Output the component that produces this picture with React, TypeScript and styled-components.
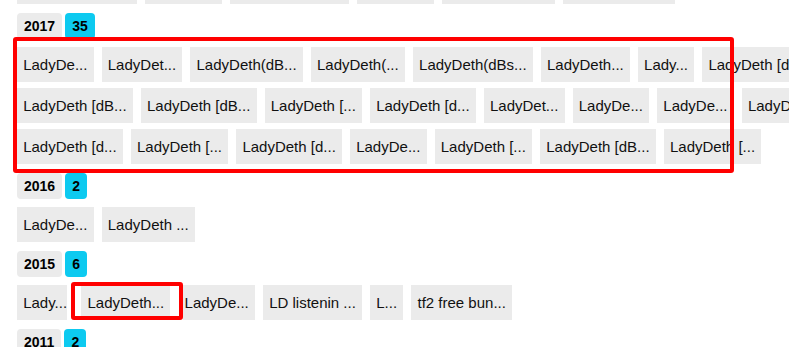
import React from 'react';
import styled, { createGlobalStyle } from 'styled-components';

const GlobalStyle = createGlobalStyle`
  html, body {
    margin: 0;
    padding: 0;
    overflow: hidden;
    background: #fff;
  }
  body {
    font-family: "Liberation Sans", Arial, sans-serif;
    color: #111;
  }
`;

const Page = styled.div`
  display: flex;
  flex-direction: column;
  gap: 9px;
  margin-top: -31px;
  padding-left: 17px;
`;

const Group = styled.section`
  display: flex;
  flex-direction: column;
  gap: 8px;
`;

const Header = styled.div`
  display: flex;
  align-items: center;
  gap: 3px;
`;

const YearTag = styled.span`
  height: 26px;
  line-height: 26px;
  padding: 0 7px;
  border-radius: 4px;
  background: #ebebeb;
  font-size: 14px;
  font-weight: 700;
  color: #000;
`;

const CountBadge = styled(YearTag)`
  background: #0dcaf0;
`;

const Rows = styled.div`
  position: relative;
  display: flex;
  flex-direction: column;
  gap: 6px;
`;

const TileRow = styled.div`
  display: flex;
  align-items: flex-start;
  gap: 8px;
  white-space: nowrap;
`;

const Tile = styled.span`
  flex: none;
  display: flex;
  align-items: center;
  height: 35px;
  padding: 0 6.2px;
  background: #ebebeb;
  font-size: 15px;
  color: #111;
`;

// annotation frame drawn over the grid of 2017
const Frame = styled.div`
  position: absolute;
  top: -10px;
  bottom: -9px;
  left: -4px;
  width: 721px;
  border: 4px solid #ff0000;
  border-radius: 3px;
  box-sizing: border-box;
  pointer-events: none;
`;

// single highlighted tile, pasted with a white margin
const Marked = styled.span`
  position: relative;
  flex: none;
  display: flex;
  margin: -3px -13px 0 -14px;
  padding: 3px 13px 0 14px;
  background: #fff;

  &::after {
    content: '';
    position: absolute;
    top: 0;
    bottom: 0;
    left: 4px;
    right: 0;
    border: 4px solid #ff0000;
    border-radius: 3px;
  }
`;

type YearGroup = {
  year: string;
  count: number;
  rows: string[][];
  framed?: boolean;
  marked?: number;
};

const previousTail = [
  'LadyDeth(dBs...',
  'LadyDe...',
  'LadyDeth(dBs...',
  'LadyDe...',
  'LadyDeth(dB...',
  'LadyDeth(dB...',
];

const groups: YearGroup[] = [
  {
    year: '2017',
    count: 35,
    framed: true,
    rows: [
      [
        'LadyDe...',
        'LadyDet...',
        'LadyDeth(dB...',
        'LadyDeth(...',
        'LadyDeth(dBs...',
        'LadyDeth...',
        'Lady...',
        'LadyDeth [d...',
        'LadyDeth [dB...',
        'LadyDe...',
      ],
      [
        'LadyDeth [dB...',
        'LadyDeth [dB...',
        'LadyDeth [...',
        'LadyDeth [d...',
        'LadyDet...',
        'LadyDe...',
        'LadyDe...',
        'LadyDe...',
        'LadyDeth [...',
      ],
      [
        'LadyDeth [d...',
        'LadyDeth [...',
        'LadyDeth [d...',
        'LadyDe...',
        'LadyDeth [...',
        'LadyDeth [dB...',
        'LadyDeth [...',
      ],
    ],
  },
  {
    year: '2016',
    count: 2,
    rows: [['LadyDe...', 'LadyDeth ...']],
  },
  {
    year: '2015',
    count: 6,
    marked: 1,
    rows: [
      [
        'Lady...',
        'LadyDeth...',
        'LadyDe...',
        'LD listenin ...',
        'L...',
        'tf2 free bun...',
      ],
    ],
  },
  {
    year: '2011',
    count: 2,
    rows: [['LadyDe...', 'LadyDeth...']],
  },
];

const App: React.FC = () => (
  <>
    <GlobalStyle />
    <Page>
      <TileRow>
        {previousTail.map((name, i) => (
          <Tile key={i}>{name}</Tile>
        ))}
      </TileRow>
      {groups.map((g) => (
        <Group key={g.year}>
          <Header>
            <YearTag>{g.year}</YearTag>
            <CountBadge>{g.count}</CountBadge>
          </Header>
          <Rows>
            {g.rows.map((row, r) => (
              <TileRow key={r}>
                {row.map((name, i) =>
                  g.marked === i ? (
                    <Marked key={i}>
                      <Tile>{name}</Tile>
                    </Marked>
                  ) : (
                    <Tile key={i}>{name}</Tile>
                  )
                )}
              </TileRow>
            ))}
            {g.framed && <Frame />}
          </Rows>
        </Group>
      ))}
    </Page>
  </>
);

export default App;
